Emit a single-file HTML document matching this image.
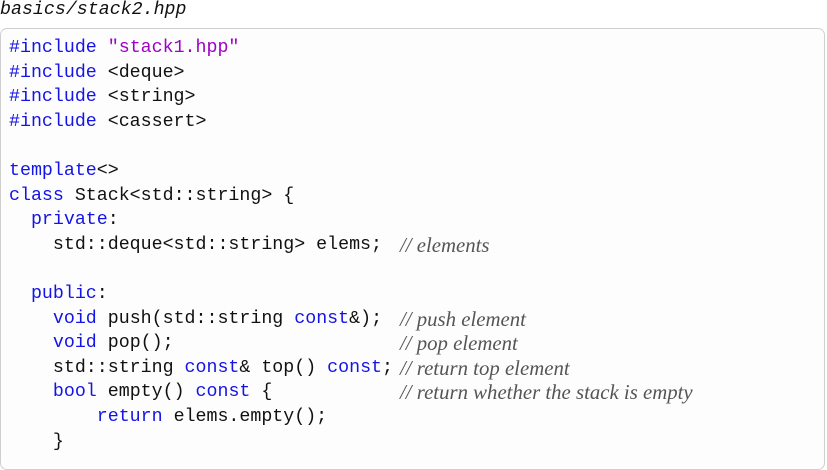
<!DOCTYPE html>
<html><head><style>
html,body{margin:0;padding:0;background:#fff;width:827px;height:456px;overflow:hidden}
.t{position:absolute;left:0;top:0px;font:italic 18.3px "Liberation Mono",monospace;color:#111}
.box{position:absolute;left:0;top:28px;width:823px;height:440px;border:1px solid #d0d0d0;border-radius:7px;background:#fdfdfd}
.l{position:absolute;left:9px;height:24.6px;line-height:24.6px;font:18.3px "Liberation Mono",monospace;color:#111;white-space:pre}
.k{color:#1414e6}.s{color:#a000c8}
.c{position:absolute;left:400px;font:italic 20.8px "Liberation Serif",serif;color:#555;white-space:pre;line-height:24.6px}
</style></head><body>
<div class="t">basics/stack2.hpp</div>
<div class="box"></div>
<div style="position:absolute;left:0;top:4px;width:827px;height:460px">
<div class="l" style="top:34px"><span class="k">#include</span> <span class="s">"stack1.hpp"</span></div>
<div class="l" style="top:58.6px"><span class="k">#include</span> &lt;deque&gt;</div>
<div class="l" style="top:83.2px"><span class="k">#include</span> &lt;string&gt;</div>
<div class="l" style="top:107.8px"><span class="k">#include</span> &lt;cassert&gt;</div>
<div class="l" style="top:157px"><span class="k">template</span>&lt;&gt;</div>
<div class="l" style="top:181.6px"><span class="k">class</span> Stack&lt;std::string&gt; {</div>
<div class="l" style="top:206.2px">  <span class="k">private</span>:</div>
<div class="l" style="top:230.8px">    std::deque&lt;std::string&gt; elems;</div>
<div class="c" style="top:229.8px">// elements</div>
<div class="l" style="top:280px">  <span class="k">public</span>:</div>
<div class="l" style="top:304.6px">    <span class="k">void</span> push(std::string <span class="k">const</span>&amp;);</div>
<div class="c" style="top:303.6px">// push element</div>
<div class="l" style="top:329.2px">    <span class="k">void</span> pop();</div>
<div class="c" style="top:328.2px">// pop element</div>
<div class="l" style="top:353.8px">    std::string <span class="k">const</span>&amp; top() <span class="k">const</span>;</div>
<div class="c" style="top:352.8px">// return top element</div>
<div class="l" style="top:378.4px">    <span class="k">bool</span> empty() <span class="k">const</span> {</div>
<div class="c" style="top:377.4px">// return whether the stack is empty</div>
<div class="l" style="top:403px">        <span class="k">return</span> elems.empty();</div>
<div class="l" style="top:427.6px">    }</div>
</div>
</body></html>
